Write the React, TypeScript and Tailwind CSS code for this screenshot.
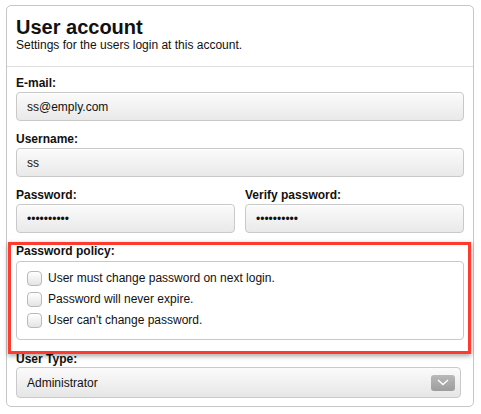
const fieldInput =
  'flex h-[29px] w-full items-center rounded-[4px] border border-[#c9c9c9] bg-gradient-to-b from-[#fbfbfb] to-[#e9e9e9] px-[10px] text-[12px] text-[#111] shadow-[inset_0_1px_0_#fff]';

const labelCls = 'text-[12px] leading-[14px] font-bold text-[#111]';

function Field({ label, value, className = '' }: { label: string; value: string; className?: string }) {
  return (
    <div className={className}>
      <div className={labelCls}>{label}</div>
      <div className={'mt-[2px] ' + fieldInput}>{value}</div>
    </div>
  );
}

const policies = [
  'User must change password on next login.',
  'Password will never expire.',
  "User can't change password.",
];

export default function App() {
  return (
    <div className="h-[414px] w-[481px] bg-white pt-[5px] pl-[6px]" style={{ fontFamily: '"Liberation Sans", Arial, sans-serif' }}>
      <div className="relative w-[468px] rounded-[5px] border border-[#c6c6c6] bg-white">
        {/* header */}
        <div className="px-[9px] pt-[10px] pb-[14px]">
          <h1 className="text-[20px] leading-[22px] font-bold text-[#111]">User account</h1>
          <p className="text-[12px] leading-[14px] text-[#111]">Settings for the users login at this account.</p>
        </div>
        <div className="h-px bg-[#dedede]" />

        <div className="flex flex-col gap-[11px] px-[9px] pt-[9px] pb-[8px]">
          <Field label="E-mail:" value="ss@emply.com" />
          <Field label="Username:" value="ss" />
          <div className="flex gap-[10px]">
            <Field label="Password:" value="••••••••••" className="w-[219px]" />
            <Field label="Verify password:" value="••••••••••" className="flex-1" />
          </div>

          <div>
            <div className={labelCls}>Password policy:</div>
            <div className="mt-[3px] flex h-[79px] flex-col gap-[6px] rounded-[4px] border border-[#c9c9c9] bg-white pt-[9px] pl-[10px]">
              {policies.map((p) => (
                <label key={p} className="flex h-[15px] items-center gap-[6px] text-[12px] leading-[15px] text-[#111]">
                  <span className="h-[15px] w-[15px] rounded-[4px] border border-[#b9b9b9] bg-gradient-to-b from-[#fff] to-[#e4e4e4]" />
                  {p}
                </label>
              ))}
            </div>
          </div>

          <div className="mt-px">
            <div className={labelCls}>User Type:</div>
            <div className="mt-px flex h-[31px] w-[445px] items-center justify-between rounded-[4px] border border-[#c9c9c9] bg-gradient-to-b from-[#fbfbfb] to-[#e6e6e6] pr-[5px] pl-[10px] text-[12px] text-[#111]">
              <span>Administrator</span>
              <span className="flex h-[16px] w-[24px] items-center justify-center rounded-[3px] bg-gradient-to-b from-[#b9b9b9] to-[#9d9d9d]">
                <svg width="12" height="7" viewBox="0 0 12 7">
                  <path d="M1 1l5 4.5L11 1" fill="none" stroke="#fff" strokeWidth="1.4" />
                </svg>
              </span>
            </div>
          </div>
        </div>

        {/* annotation highlight */}
        <div className="pointer-events-none absolute top-[236px] left-[1px] h-[112px] w-[463px] border-[3px] border-[#ff3b30] shadow-[0_2px_5px_rgba(0,0,0,0.35)]" />
      </div>
    </div>
  );
}
